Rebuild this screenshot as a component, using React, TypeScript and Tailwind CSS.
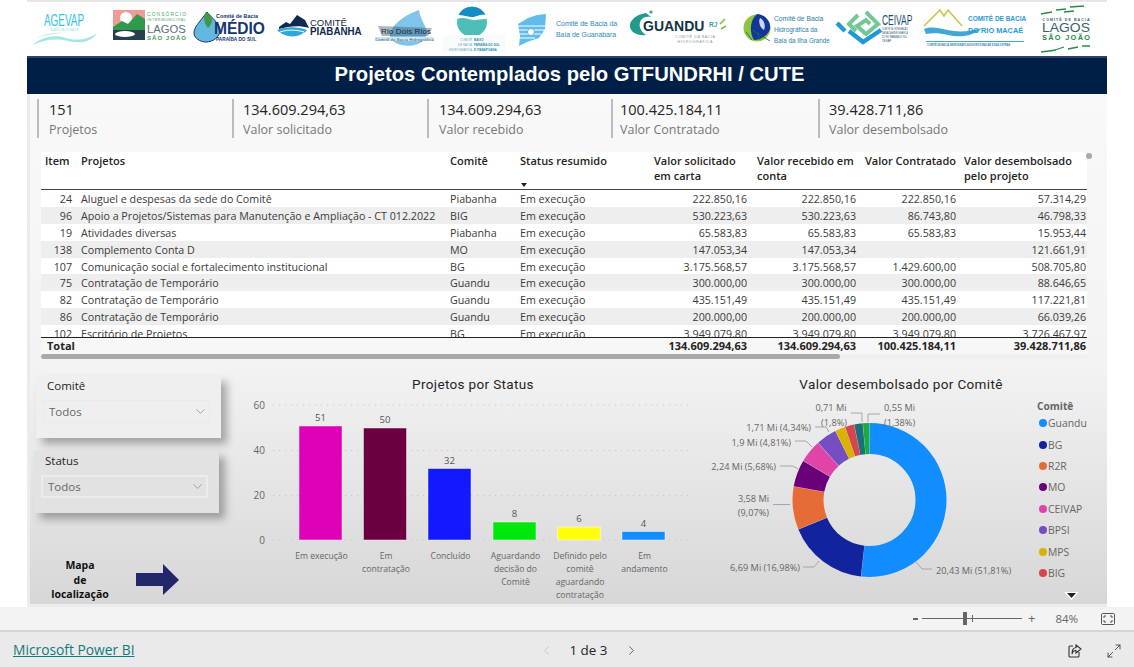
import React from 'react'
import { ChevronDown, ChevronLeft, ChevronRight, Maximize2 } from 'lucide-react'

const rows = [
  ['24', 'Aluguel e despesas da sede do Comitê', 'Piabanha', '222.850,16', '222.850,16', '222.850,16', '57.314,29'],
  ['96', 'Apoio a Projetos/Sistemas para Manutenção e Ampliação - CT 012.2022', 'BIG', '530.223,63', '530.223,63', '86.743,80', '46.798,33'],
  ['19', 'Atividades diversas', 'Piabanha', '65.583,83', '65.583,83', '65.583,83', '15.953,44'],
  ['138', 'Complemento Conta D', 'MO', '147.053,34', '147.053,34', '', '121.661,91'],
  ['107', 'Comunicação social e fortalecimento institucional', 'BG', '3.175.568,57', '3.175.568,57', '1.429.600,00', '508.705,80'],
  ['75', 'Contratação de Temporário', 'Guandu', '300.000,00', '300.000,00', '300.000,00', '88.646,65'],
  ['82', 'Contratação de Temporário', 'Guandu', '435.151,49', '435.151,49', '435.151,49', '117.221,81'],
  ['86', 'Contratação de Temporário', 'Guandu', '200.000,00', '200.000,00', '200.000,00', '66.039,26'],
  ['102', 'Escritório de Projetos', 'BG', '3.949.079,80', '3.949.079,80', '3.949.079,80', '3.726.467,97']
]

const kpis = [
  { value: '151', label: 'Projetos', width: 'w-[195px]', pad: 'pl-[10px]' },
  { value: '134.609.294,63', label: 'Valor solicitado', width: 'w-[195px]', pad: 'pl-[9px]' },
  { value: '134.609.294,63', label: 'Valor recebido', width: 'w-[184px]', pad: 'pl-[10px]' },
  { value: '100.425.184,11', label: 'Valor Contratado', width: 'w-[207px]', pad: 'pl-[7px]' },
  { value: '39.428.711,86', label: 'Valor desembolsado', width: 'w-[220px]', pad: 'pl-[9px]' }
]

const bars = [
  { x: 299, top: 426, color: '#df00b8', value: '51', label: ['Em execução'] },
  { x: 363.5, top: 428, color: '#6b0040', value: '50', label: ['Em', 'contratação'] },
  { x: 428, top: 468.5, color: '#1418ff', value: '32', label: ['Concluído'] },
  { x: 493, top: 522, color: '#00e80a', value: '8', label: ['Aguardando', 'decisão do', 'Comitê'] },
  { x: 557.5, top: 527, color: '#ffff0a', value: '6', label: ['Definido pelo', 'comitê', 'aguardando', 'contratação'] },
  { x: 622, top: 531.5, color: '#118dff', value: '4', label: ['Em', 'andamento'] }
]

const slices = [
  { name: 'Guandu', pct: 51.81, color: '#118dff' },
  { name: 'BG', pct: 16.98, color: '#12239e' },
  { name: 'R2R', pct: 9.07, color: '#e66c37' },
  { name: 'MO', pct: 5.68, color: '#6b007b' },
  { name: 'CEIVAP', pct: 4.81, color: '#e044a7' },
  { name: 'BPSI', pct: 4.34, color: '#744ec2' },
  { name: 'MPS', pct: 2.2, color: '#d9b300' },
  { name: 'BIG', pct: 1.93, color: '#d64550' },
  { name: 'Teal', pct: 1.8, color: '#197278' },
  { name: 'Green', pct: 1.38, color: '#1aab40' }
]

const donutLabels = [
  { x: 831, y: 411, text: '0,71 Mi', anchor: 'middle' },
  { x: 834, y: 426, text: '(1,8%)', anchor: 'middle' },
  { x: 884, y: 411, text: '0,55 Mi', anchor: 'start' },
  { x: 884, y: 426, text: '(1,38%)', anchor: 'start' },
  { x: 811, y: 431, text: '1,71 Mi (4,34%)', anchor: 'end' },
  { x: 791, y: 446, text: '1,9 Mi (4,81%)', anchor: 'end' },
  { x: 776, y: 470, text: '2,24 Mi (5,68%)', anchor: 'end' },
  { x: 769, y: 502, text: '3,58 Mi', anchor: 'end' },
  { x: 769, y: 516, text: '(9,07%)', anchor: 'end' },
  { x: 800, y: 571, text: '6,69 Mi (16,98%)', anchor: 'end' },
  { x: 936, y: 574, text: '20,43 Mi (51,81%)', anchor: 'start' }
]

const leaders = [
  'M851 413 H862 V422',
  'M868 422 V414 H880',
  'M815 427 H826 L829 432',
  'M795 441 H806 L812 447',
  'M780 466 H793 L798 469',
  'M773 504.5 H790',
  'M803 567 H814 L819 561',
  'M916 562 L922 569 H932'
]

const legendY = [423, 445, 466, 487, 509, 530, 552, 573]

const LOGO_FONT = '"Liberation Sans", sans-serif'

// each logo is drawn in page coordinates, the viewBox just slices the row
const Logo = ({ from, to, children }: { from: number; to: number; children: React.ReactNode }) => (
  <svg className="shrink-0" width={to - from} height="54" viewBox={`${from} 2 ${to - from} 54`} fontFamily={LOGO_FONT}>
    {children}
  </svg>
)

// condensed logo lettering: the installed fonts have no narrow cut
const Narrow = ({ x, y, sx, children, ...rest }: React.SVGProps<SVGTextElement> & { sx: number }) => (
  <text transform={`translate(${x} ${y}) scale(${sx} 1)`} {...rest}>
    {children}
  </text>
)

const Logos = () => (
  <div className="flex h-[54px] bg-white">
    <Logo from={27} to={105}>
      <Narrow x={44} y={26} sx={0.62} fontSize="16" fill="#2cc4e4">AGEVAP</Narrow>
      <text x="64.5" y="30.5" textAnchor="middle" fontSize="3" fill="#a5e3d8">AGÊNCIA DE BACIA</text>
      <path d="M32 45 C42 37 54 34 66 38 C76 41 88 40 97 33 C92 42 80 44 68 41 C55 38 44 40 32 45Z" fill="#a5e6e4" />
      <path d="M36 38 C46 33 54 32 62 33 C54 34 46 35 36 38Z" fill="#c8f0ee" />
    </Logo>
    <Logo from={105} to={190}>
      <rect x="113" y="10" width="32" height="30" fill="#ef9b97" />
      <circle cx="126" cy="18" r="6" fill="#ffffff" />
      <path d="M113 27 L122 21 L128 24 L137 14 L145 19 V32 H113Z" fill="#2f9a4b" />
      <path d="M113 30 H145 V40 H113Z" fill="#26404d" />
      <ellipse cx="125" cy="34" rx="10" ry="3" fill="#ffffff" />
      <text x="147" y="16" fontSize="4.9" textLength="39" fill="#4ea66c">CONSÓRCIO</text>
      <text x="147" y="21" fontSize="3.8" textLength="39" fill="#4ea66c">INTERMUNICIPAL</text>
      <Narrow x={147} y={33} sx={0.98} fontSize="11.5" fill="#5e6f78">LAGOS</Narrow>
      <text x="147" y="40" fontSize="6" fontWeight="700" textLength="39" fill="#3f9a55">SÃO JOÃO</text>
    </Logo>
    <Logo from={190} to={270}>
      <path d="M207 12 C199 23 194 27 194 33 C194 38 200 42 206 42 C213 42 220 37 220 30 C220 24 212 18 207 12Z" fill="#62b8e0" stroke="#15366f" />
      <path d="M206 12 C213 15 214 23 208 28 C204 24 203 17 206 12Z" fill="#3f9a45" />
      <text x="216" y="18" fontSize="5.4" fontWeight="700" fill="#15366f">Comitê de Bacia</text>
      <Narrow x={214} y={34} sx={0.915} fontSize="17" fontWeight="700" fill="#15366f">MÉDIO</Narrow>
      <Narrow x={216} y={41} sx={0.85} fontSize="5.6" fontWeight="700" fill="#15366f">PARAÍBA DO SUL</Narrow>
    </Logo>
    <Logo from={270} to={370}>
      <path d="M279 27 L286 22 L290 24 L297 15 L305 20 L309 28 C300 25 289 26 279 29Z" fill="#10294f" />
      <path d="M277 30 C288 26 298 27 307 30 C300 38 286 39 277 30Z" fill="#2ea5dc" />
      <path d="M280 32 C289 29 297 30 304 32" fill="none" stroke="#ffffff" strokeWidth="1" />
      <text x="310" y="26" fontSize="9.5" fill="#10294f">COMITÊ</text>
      <Narrow x={310} y={35} sx={0.98} fontSize="10" fontWeight="700" fill="#10294f">PIABANHA</Narrow>
    </Logo>
    <Logo from={370} to={438}>
      <path d="M419 10 C404 15 390 26 390 36 C392 46 414 50 424 40 C432 30 420 22 419 10Z" fill="#7fc4ea" />
      <path d="M378 26 L432 28 L428 36 L382 36Z" fill="#3c5f7a" opacity="0.45" />
      <text x="406" y="34" textAnchor="middle" fontSize="8" textLength="50" fill="#1c2a33">Rio Dois Rios</text>
      <rect x="375" y="37" width="59" height="4" fill="#cfe6f2" />
      <text x="404.5" y="40.5" textAnchor="middle" fontSize="3.6" textLength="58" fill="#33444f">Comitê da Bacia Hidrográfica</text>
    </Logo>
    <Logo from={438} to={512}>
      <circle cx="472" cy="22" r="15" fill="#4dbfb8" />
      <path d="M458 16 A15 15 0 0 1 486 16 C478 14 476 18 470 17 C465 16 462 15 458 16Z" fill="#168cc4" />
      <path d="M457 19 C465 16 470 21 476 20 C481 19 484 19 487 19 L486 15 C478 14 476 18 470 17 C465 16 462 15 458 15Z" fill="#ffffff" />
      <rect x="443" y="35" width="62" height="17" fill="#f8fbfc" />
      <text x="472" y="41" textAnchor="end" fontSize="3" fill="#6aa9bb">COMITÊ</text>
      <text x="472" y="46" textAnchor="end" fontSize="3" fill="#6aa9bb">DE BACIA</text>
      <text x="472" y="51" textAnchor="end" fontSize="3" fill="#6aa9bb">HIDROGRÁFICA</text>
      <text x="474" y="41" fontSize="3" fontWeight="700" fill="#2f8fb0">BAIXO</text>
      <text x="474" y="46" fontSize="3" fontWeight="700" fill="#2f8fb0">PARAÍBA DO SUL</text>
      <text x="474" y="51" fontSize="3" fontWeight="700" fill="#2f8fb0">E ITABAPOANA</text>
    </Logo>
    <Logo from={512} to={626}>
      <path d="M518 24 L528 18 L537 15 L546 14 L545 29 L539 38 L527 42 L519 46 L520 36Z" fill="#5fbcec" />
      <path d="M518 26 H546 M518 30 H545 M518 34 H541 M518 38 H535" stroke="#ffffff" strokeWidth="1" />
      <circle cx="531" cy="32" r="3.5" fill="#ffffff" stroke="#4a9cc8" strokeWidth="0.7" />
      <Narrow x={556} y={26} sx={0.88} fontSize="8" fill="#2589b8">Comitê de Bacia da</Narrow>
      <Narrow x={556} y={37} sx={0.86} fontSize="8" fill="#2589b8">Baía de Guanabara</Narrow>
    </Logo>
    <Logo from={626} to={738}>
      <path d="M646 13 C634 15 629 22 630 27 C631 33 639 36 646 35 C640 31 638 25 641 20 C643 17 647 16 651 17Z" fill="#1f9a8c" />
      <circle cx="651" cy="12" r="1.6" fill="#3ea66a" />
      <text x="643" y="31" fontSize="14" fontWeight="700" fill="#12323f">GUANDU</text>
      <text x="709" y="27" fontSize="6.5" fontWeight="700" fill="#2f9f9a">RJ</text>
      <path d="M720 24 L725 19 M721 29 L726 26" stroke="#7fc241" strokeWidth="1.6" />
      <text x="695" y="38" textAnchor="middle" fontSize="3.6" textLength="40" fill="#8a9aa0">COMITÊ DA BACIA</text>
      <text x="695" y="43" textAnchor="middle" fontSize="3.6" textLength="35" fill="#8a9aa0">HIDROGRÁFICA</text>
    </Logo>
    <Logo from={738} to={833}>
      <circle cx="757" cy="28" r="13.5" fill="#8dc63f" />
      <path d="M757 14 C767 15 771 23 770 29 C768 36 760 40 754 40 C749 32 750 20 757 14Z" fill="#12369a" />
      <path d="M760 18 C764 20 766 25 764 30 C760 28 758 22 760 18Z" fill="#ffffff" opacity="0.8" />
      <path d="M752 30 L770 41 M746 32 L752 40 M757 32 L760 40" fill="none" stroke="#0f6f3f" strokeWidth="0.8" />
      <Narrow x={774} y={21} sx={0.84} fontSize="8" fill="#1d7fa8">Comitê de Bacia</Narrow>
      <Narrow x={774} y={32} sx={0.8} fontSize="8" fill="#1d7fa8">Hidrográfica da</Narrow>
      <Narrow x={774} y={43} sx={0.78} fontSize="8" fill="#1d7fa8">Baía da Ilha Grande</Narrow>
    </Logo>
    <Logo from={833} to={920}>
      <path d="M866 12 L878 24 L866 34 L857 26 L866 20 L870 24" fill="none" stroke="#74c794" strokeWidth="4" />
      <path d="M858 15 L849 24 L856 31" fill="none" stroke="#74c794" strokeWidth="4" />
      <path d="M837 23 L845 31 M849 31 L863 42 L881 30" fill="none" stroke="#1f9ad6" strokeWidth="4.5" />
      <Narrow x={882} y={25} sx={0.564} fontSize="15" fill="#1c4f6f">CEIVAP</Narrow>
      <Narrow x={882} y={30} sx={0.8} fontSize="2.6" fill="#1c4f6f">COMITÊ DE INTEGRAÇÃO</Narrow>
      <Narrow x={882} y={34} sx={0.8} fontSize="2.6" fill="#1c4f6f">DA BACIA HIDROGRÁFICA</Narrow>
      <Narrow x={882} y={38} sx={0.8} fontSize="2.6" fill="#1c4f6f">DO RIO PARAÍBA DO SUL</Narrow>
      <text x="882" y="42" fontSize="2.6" fill="#1c4f6f">CEIVAP</text>
    </Logo>
    <Logo from={920} to={1032}>
      <path d="M924 26 L940 10 L944 16 L948 10 L962 26" fill="none" stroke="#c9c64a" strokeWidth="1.6" />
      <path d="M924 29 C934 25 944 30 954 31 C962 32 972 31 982 28 C974 36 960 38 948 35 C940 33 932 33 926 34Z" fill="#3fa8d8" />
      <Narrow x={968} y={21} sx={0.85} fontSize="7.6" fontWeight="700" fill="#1e9bd7">COMITÊ DE BACIA</Narrow>
      <Narrow x={968} y={33} sx={0.92} fontSize="8" fontWeight="700" fill="#1e9bd7">DO RIO MACAÉ</Narrow>
      <rect x="926" y="41" width="98" height="1" fill="#3fa8d8" />
      <Narrow x={927} y={46} sx={0.88} fontSize="2.8" fontWeight="700" fill="#2a7ca8">COMITÊ DE BACIA HIDROGRÁFICA DOS RIOS MACAÉ E DAS OSTRAS</Narrow>
    </Logo>
    <Logo from={1032} to={1107}>
      <path d="M1041 14 L1052 12 M1056 10 L1066 9 M1070 7 L1084 6 M1064 12 L1074 11" fill="none" stroke="#2b8a4a" strokeWidth="1.3" />
      <text x="1066" y="21" textAnchor="middle" fontSize="3.6" fontWeight="700" textLength="47" fill="#3c5d6a">COMITÊ DE BACIA</text>
      <text x="1066" y="32" textAnchor="middle" fontSize="12.5" textLength="48" lengthAdjust="spacingAndGlyphs" fill="#3c5d6a">LAGOS</text>
      <text x="1066" y="40" textAnchor="middle" fontSize="7.4" fontWeight="700" textLength="48" fill="#2b8a4a">SÃO JOÃO</text>
      <path d="M1041 52 L1056 50 M1052 51 L1064 47 M1068 49 L1078 47 M1082 46 L1090 46" fill="none" stroke="#2b8a4a" strokeWidth="1.3" />
    </Logo>
  </div>
)

const cols = 'grid grid-cols-[35px_370px_70px_133px_103px_108px_99px_128px]'

const ProjectsTable = () => (
  <div className="relative ml-[14px] mt-[13px] h-[207px] w-[1060px] text-[10.7px] leading-[18.5px] text-[#3a3a3a]">
    <div className={`${cols} h-[38px] w-[1046px] border-b border-[#444444] bg-white text-[11px] font-semibold leading-[17px] text-[#252423]`}>
      <div className="pl-[4px]">Item</div>
      <div className="pl-[5px]">Projetos</div>
      <div className="pl-[4px]">Comitê</div>
      <div className="relative pl-[4px]">
        Status resumido
        <span className="absolute left-[5px] top-[31px] h-0 w-0 border-x-[3px] border-t-[4px] border-x-transparent border-t-[#222222]" />
      </div>
      <div className="pl-[5px] pt-[1px] leading-[15px]">Valor solicitado em carta</div>
      <div className="pl-[5px] pt-[1px] leading-[15px]">Valor recebido em conta</div>
      <div className="pl-[5px] pt-[1px] leading-[15px]">Valor Contratado</div>
      <div className="pl-[5px] pt-[1px] leading-[15px]">Valor desembolsado pelo projeto</div>
    </div>
    <div className="h-[147px] w-[1046px] overflow-hidden">
      {rows.map((row, i) => (
        <div key={row[0]} className={`${cols} h-[16.9px] ${i % 2 === 0 ? 'bg-white' : 'bg-[#eeeeee]'}`}>
          <div className="pr-[4px] text-right">{row[0]}</div>
          <div className="truncate pl-[5px]">{row[1]}</div>
          <div className="pl-[4px]">{row[2]}</div>
          <div className="pl-[4px]">Em execução</div>
          <div className="pr-[5px] text-right">{row[3]}</div>
          <div className="pr-[4px] text-right">{row[4]}</div>
          <div className="pr-[3px] text-right">{row[5]}</div>
          <div className="pr-[1px] text-right">{row[6]}</div>
        </div>
      ))}
    </div>
    <div className={`${cols} h-[17px] w-[1046px] border-t border-[#222222] bg-[#f7f7f7] text-[11px] font-bold leading-[15px] text-[#252423]`}>
      <div className="pl-[6px]">Total</div>
      <div />
      <div />
      <div />
      <div className="pr-[5px] text-right">134.609.294,63</div>
      <div className="pr-[4px] text-right">134.609.294,63</div>
      <div className="pr-[3px] text-right">100.425.184,11</div>
      <div className="pr-[1px] text-right">39.428.711,86</div>
    </div>
    <div className="h-[5px] w-[1046px] rounded-full bg-[#f0f0f0]">
      <div className="h-full w-[799px] rounded-full bg-[#a9a9a9]" />
    </div>
    <span className="absolute left-[1045px] top-[1px] size-[6px] rounded-full bg-[#a9a9a9]" />
  </div>
)

const Slicer = ({ title, boxed, className }: { title: string; boxed?: boolean; className: string }) => (
  <div className={`h-[62px] w-[185px] pl-[7px] pr-[11px] pt-[1px] shadow-[6px_6px_8px_rgba(0,0,0,0.3)] ${className}`}>
    <div className="pl-[4px] text-[11.5px] font-medium leading-[17px] text-[#252423]">{title}</div>
    <div className={`mt-[6px] flex h-[23px] items-center justify-between pl-[5px] pr-[1px] text-[11.5px] text-[#666666] ${boxed ? 'border-2 border-[#ececec]' : 'border border-[#eaeaea]'}`}>
      <span>Todos</span>
      <ChevronDown size={15} strokeWidth={1} color="#777777" />
    </div>
  </div>
)

const BarChart = () => (
  <svg className="shrink-0" width="445" height="235" viewBox="245 370 445 235" fontFamily='"Open Sans", sans-serif'>
    <text x="473" y="389" textAnchor="middle" fontSize="13.5" fill="#252423" fontFamily="Roboto, sans-serif" letterSpacing="0.35">Projetos por Status</text>
    {[{ y: 405, v: '60' }, { y: 450.5, v: '40' }, { y: 495.5, v: '20' }, { y: 540, v: '0' }].map(t => (
      <g key={t.v}>
        <text x="265" y={t.y + 3.5} textAnchor="end" fontSize="10" fill="#666666">{t.v}</text>
        <line x1="273" x2="690" y1={t.y} y2={t.y} stroke="#c4c4c4" strokeDasharray="1 5" />
      </g>
    ))}
    {bars.map(b => (
      <g key={b.value}>
        <rect x={b.x} y={b.top} width="43" height={540 - b.top} fill={b.color} stroke="#ffffff" strokeOpacity="0.45" />
        <text x={b.x + 21.5} y={b.top - 5} textAnchor="middle" fontSize="9.5" fill="#555555">{b.value}</text>
        {b.label.map((line, i) => (
          <text key={line} x={b.x + 22.5} y={559 + i * 13} textAnchor="middle" fontSize="8.6" fill="#666666">{line}</text>
        ))}
      </g>
    ))}
  </svg>
)

const DonutChart = () => {
  let offset = 0
  return (
    <svg className="shrink-0" width="417" height="235" viewBox="690 370 417 235" fontFamily='"Open Sans", sans-serif'>
      <text x="901" y="389" textAnchor="middle" fontSize="13.5" fill="#252423" fontFamily="Roboto, sans-serif" letterSpacing="0.35">Valor desembolsado por Comitê</text>
      <g transform="rotate(-90 869.5 500)">
        {slices.map(s => {
          const el = (
            <circle
              key={s.name}
              cx="869.5"
              cy="500"
              r="61.5"
              fill="none"
              stroke={s.color}
              strokeWidth="31"
              pathLength="100"
              strokeDasharray={`${s.pct - 0.06} ${100 - s.pct + 0.06}`}
              strokeDashoffset={-offset}
            />
          )
          offset += s.pct
          return el
        })}
      </g>
      {leaders.map(d => (
        <path key={d} d={d} fill="none" stroke="#a6a6a6" />
      ))}
      {donutLabels.map(l => (
        <text key={l.text} x={l.x} y={l.y} textAnchor={l.anchor as 'start' | 'middle' | 'end'} fontSize="9.2" fill="#666666">{l.text}</text>
      ))}
      <text x="1037" y="410" fontSize="10.2" fontWeight="700" fill="#666666">Comitê</text>
      {slices.slice(0, 8).map((s, i) => (
        <g key={s.name}>
          <circle cx="1043" cy={legendY[i]} r="4" fill={s.color} />
          <text x="1048" y={legendY[i] + 4} fontSize="10.4" fill="#666666">{s.name}</text>
        </g>
      ))}
      <path d="M1064 592 H1079 L1071.5 600Z" fill="#ffffff" />
      <path d="M1067 593 H1076 L1071.5 598Z" fill="#222222" />
    </svg>
  )
}

const App = () => (
  <div className="flex h-[667px] w-[1134px] flex-col overflow-hidden bg-white font-['Open_Sans',sans-serif]">
    <div className="ml-[27px] h-[607px] w-[1080px] shrink-0 overflow-hidden border-b-[3px] border-t-2 border-b-[#ebebeb] border-t-[#e6e6e6] bg-gradient-to-b from-[#fbfbfb] via-[#f3f3f3] via-60% to-[#d7d7d7] shadow-[inset_3px_0_0_#ebebeb]">
      <Logos />
      <div className="h-[38px] border-t-2 border-[#2c4468] bg-[#001f47] text-center font-['Liberation_Sans',sans-serif] text-[20.2px] font-bold leading-[33px] text-white">
        <span className="ml-[5px]">Projetos Contemplados pelo GTFUNDRHI / CUTE</span>
      </div>
      <div className="ml-[10px] mt-[5px] flex h-[40px]">
        {kpis.map(k => (
          <div key={k.label} className={`${k.width} shrink-0`}>
            <div className={`h-[39px] w-fit border-l-2 border-[#bcbcbc] ${k.pad}`}>
              <div className="text-[14.5px] leading-[22px] text-[#252423]">{k.value}</div>
              <div className="text-[12.5px] leading-[17px] text-[#777777]">{k.label}</div>
            </div>
          </div>
        ))}
      </div>
      <ProjectsTable />
      <div className="mt-[11px] flex h-[235px]">
        <div className="w-[218px] shrink-0">
          <Slicer title="Comitê" className="ml-[9px] mt-[6px] bg-[#efefef]" />
          <Slicer title="Status" boxed className="ml-[7px] mt-[13px] bg-[#e2e2e2]" />
          <div className="ml-[22px] mt-[45px] flex items-center">
            <div className="w-[62px] text-center text-[10.5px] font-bold leading-[14.5px] text-[#111111]">
              Mapa
              <br />
              de
              <br />
              localização
            </div>
            <svg className="ml-[25px] shrink-0" width="44" height="32" viewBox="0 0 44 32">
              <path d="M0 9 H27 V0 L43 16 L27 31 V22 H0Z" fill="#22266b" />
            </svg>
          </div>
        </div>
        <BarChart />
        <DonutChart />
      </div>
    </div>
    <div className="flex h-[23px] shrink-0 items-center bg-[#f3f3f3] text-[#666666]">
      <span className="ml-[913px] h-[2px] w-[5px] bg-[#666666]" />
      <div className="relative ml-[4px] h-[1px] w-[100px] bg-[#666666]">
        <span className="absolute left-[41px] top-[-6px] h-[13px] w-[4px] bg-[#666666]" />
        <span className="absolute left-[50px] top-[-3px] h-[7px] w-[1px] bg-[#666666]" />
      </div>
      <span className="ml-[6px] text-[13px] leading-none">+</span>
      <span className="ml-[20px] text-[11.5px]">84%</span>
      <svg className="ml-[23px] shrink-0" width="14" height="12" viewBox="0 0 14 12" fill="none" stroke="#555555">
        <rect x="0.5" y="0.5" width="13" height="11" rx="1" />
        <path d="M3 5 V3 H5 M9 3 H11 V5 M11 7 V9 H9 M5 9 H3 V7" />
      </svg>
    </div>
    <div className="flex h-[37px] shrink-0 items-center border-t-2 border-[#d4d4d4] bg-[#eaeaea] pt-[2px]">
      <a className="ml-[13px] text-[13.8px] text-[#117a7a] underline">Microsoft Power BI</a>
      <ChevronLeft className="ml-[405px]" size={15} strokeWidth={1.2} color="#b5b5b5" />
      <span className="ml-[15px] text-[13.4px] font-medium text-[#252423]">1 de 3</span>
      <ChevronRight className="ml-[17px]" size={15} strokeWidth={1.3} color="#444444" />
      <svg className="ml-[429px] shrink-0" width="14" height="14" viewBox="0 0 14 14" fill="none" stroke="#333333" strokeWidth="1.1">
        <path d="M5 2 H2 Q1 2 1 3 V12 Q1 13 2 13 H10 Q11 13 11 12 V8" />
        <path d="M8 1 L13 5 L8 9 V6.5 C6 6.5 4.5 8 4 10 C4 6.5 5.5 3.8 8 3.5Z" />
      </svg>
      <Maximize2 className="ml-[24px]" size={16} strokeWidth={1.1} color="#222222" />
    </div>
  </div>
)

export default App
